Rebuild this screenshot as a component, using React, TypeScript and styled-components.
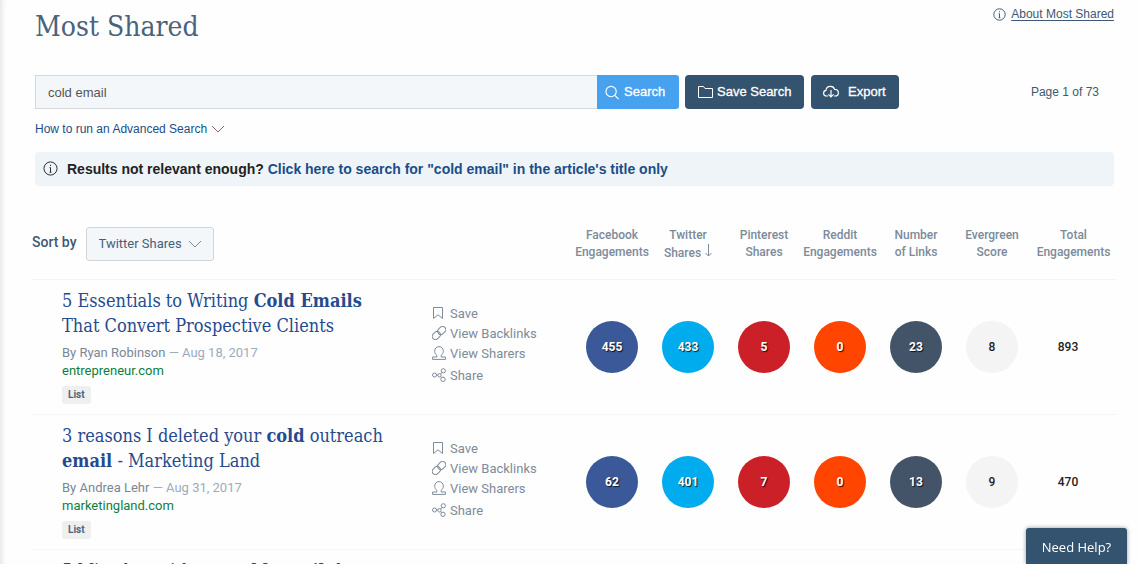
import React from "react";
import styled, { createGlobalStyle } from "styled-components";

const ui = `Roboto, "Liberation Sans", sans-serif`;
const slab = `"Roboto Slab", "DejaVu Serif Condensed", "DejaVu Serif", serif`;
const arial = `"Liberation Sans", Arial, sans-serif`;

const Global = createGlobalStyle`
  * { box-sizing: border-box; }
  body { margin: 0; background: #fefefe; font: 13px/20px ${ui}; color: #3f5873; }
  a { color: inherit; text-decoration: none; }
  button, input, select { font: inherit; }
`;

const Page = styled.main`
  height: 100vh;
  overflow: hidden;
  padding: 0 22px 0 32px;
  box-shadow: inset 6px 0 6px -5px #dcdcdc;
`;

const Section = styled.div`
  padding: 0 3px;
  font-family: ${arial};
`;

const TopBar = styled.header`
  display: flex;
  justify-content: space-between;
  align-items: flex-start;
  height: 75px;
`;

const Title = styled.h1`
  margin: 0;
  padding-top: 8px;
  font: 300 28px/38px ${slab};
  color: #4a627c;
`;

const AboutLink = styled.a`
  display: flex;
  align-items: center;
  gap: 5px;
  padding-top: 4px;
  font-size: 12px;
  line-height: 20px;
  span { text-decoration: underline; text-underline-offset: 2px; }
`;

const SearchBar = styled.form`
  display: flex;
  align-items: center;
`;

const SearchInput = styled.input`
  flex: 1;
  min-width: 0;
  height: 34px;
  padding: 0 12px;
  border: 1px solid #d5d8da;
  border-right: 0;
  border-radius: 0;
  background: #f3f7fa;
  color: #555;
  outline: 0;
`;

const Button = styled.button<{ $kind?: "primary"; $width: number; $gap: number }>`
  display: flex;
  align-items: center;
  gap: ${(p) => p.$gap}px;
  width: ${(p) => p.$width}px;
  height: 34px;
  margin-right: ${(p) => (p.$kind ? 6 : 7)}px;
  padding: 0 0 0 ${(p) => (p.$kind ? 8 : 12)}px;
  border: 0;
  border-radius: ${(p) => (p.$kind ? "0 3px 3px 0" : "4px")};
  background: ${(p) => (p.$kind ? "#46a1ef" : "#34536e")};
  color: #fff;
  font-size: 13px;
  -webkit-text-stroke: 0.3px #fff;
`;

const PageCount = styled.span`
  width: 208px;
  padding-right: 15px;
  text-align: right;
  font-size: 12px;
`;

const AdvancedLink = styled.a`
  display: inline-flex;
  align-items: center;
  gap: 4px;
  margin: 10px 0 13px;
  font-size: 12px;
  color: #194e88;
`;

const Notice = styled.p`
  display: flex;
  align-items: center;
  gap: 9px;
  margin: 0;
  height: 34px;
  padding: 0 8px;
  border-radius: 4px;
  background: #eff4f8;
  color: #222;
  font: bold 14px/20px ${arial};
  a { color: #194e88; }
  svg { margin-bottom: 2px; }
`;

const Results = styled.table`
  width: 100%;
  margin-top: 30px;
  border-collapse: collapse;
  table-layout: fixed;
`;

const HeadCell = styled.th`
  height: 63px;
  padding: 11px 0 0;
  vertical-align: top;
  font-size: 12px;
  line-height: 17px;
  font-weight: 500;
  color: #7b8b9b;
  white-space: nowrap;
`;

const SortCell = styled.th`
  padding: 11px 0 0;
  vertical-align: top;
  text-align: left;
`;

const Sort = styled.div`
  display: flex;
  align-items: flex-start;
  gap: 9px;
  label { font-size: 14px; font-weight: 500; line-height: 30px; }
`;

const SelectBox = styled.div`
  display: grid;
  align-items: center;
  width: 128px;
  > * { grid-area: 1 / 1; }
  svg { justify-self: end; margin-right: 12px; pointer-events: none; }
`;

const Select = styled.select`
  appearance: none;
  width: 100%;
  height: 34px;
  padding: 0 12px;
  border: 1px solid #d2d6da;
  border-radius: 3px;
  background: #f3f7fa;
  color: #46607a;
  font-size: 13px;
  font-weight: 400;
`;

const Row = styled.tr`
  height: 135px;
  border-top: 1px solid #f4f5f6;
`;

const Cell = styled.td<{ $indent?: number; $top: number }>`
  padding: ${(p) => p.$top}px 0 0 ${(p) => p.$indent ?? 0}px;
  vertical-align: top;
`;

const Headline = styled.a`
  display: block;
  font: 18px/25px ${slab};
  color: #264a8f;
  white-space: nowrap;
`;

const Byline = styled.div`
  margin-top: 6px;
  line-height: 18px;
  color: #7b8797;
  span { color: #9dabbb; }
`;

const Domain = styled.a`
  display: block;
  line-height: 18px;
  color: #0c8040;
`;

const Tag = styled.span`
  display: inline-block;
  margin-top: 6px;
  padding: 0 6px;
  border-radius: 3px;
  background: #efefef;
  color: #4c657e;
  font: bold 10px/18px ${ui};
`;

const Actions = styled.ul`
  margin: 0;
  padding: 0;
  list-style: none;
`;

const Action = styled.li`
  line-height: 20px;
  &:last-child { padding-top: 2px; }
  a { display: flex; align-items: center; gap: 4px; color: #7e8b9a; }
  svg { margin-bottom: 1px; }
`;

const Metric = styled.div<{ $bg?: string; $light?: boolean }>`
  display: grid;
  place-items: center;
  width: 52px;
  height: 52px;
  margin-left: 12px;
  border-radius: 50%;
  background: ${(p) => p.$bg ?? "transparent"};
  color: ${(p) => (p.$light ? "#fff" : "#222")};
  text-shadow: ${(p) => (p.$light ? "1px 1px 1px rgba(0,0,0,.8)" : "none")};
  font-weight: ${(p) => (p.$light ? 700 : 500)};
  font-size: 12px;
`;

const Help = styled.button`
  position: fixed;
  right: 12px;
  bottom: 0;
  width: 101px;
  height: 36px;
  padding: 2px 0 0;
  border: 0;
  border-radius: 3px 3px 0 0;
  background: #34536e;
  color: #fff;
  box-shadow: 0 0 4px rgba(0, 0, 0, 0.4);
  font: 500 13px/20px "Open Sans", sans-serif;
`;

const Svg = styled.svg`
  flex: none;
  fill: none;
  stroke: currentColor;
`;

const SortChevron = styled(Svg)`
  color: #7b8b9b;
`;

const LinkChevron = styled(Svg)`
  color: #9a5f78;
`;

const paths: Record<string, React.ReactNode> = {
  info: <><circle cx="8" cy="8" r="7" /><path d="M8 7v5M8 4v1.3M7 12h2M7 7h1" /></>,
  search: <><circle cx="6.500" cy="7" r="5.500" /><path d="M10.500 11l4 4" /></>,
  folder: <path d="M1.500 2.500h5l1.500 2h7.500v9h-14z" />,
  cloud: <><path d="M5 12H3.600C1.800 12 .6 10.800.6 9.200c0-1.500 1-2.600 2.400-2.800C3.100 3.800 5 2.300 7.400 2.300c2 0 3.700 1.100 4.200 3 2.200-.1 3.800 1.300 3.800 3.400 0 1.900-1.400 3.300-3.200 3.300H11" /><path d="M8 6v7M5.400 10.400L8 13l2.600-2.600" /></>,
  bookmark: <path d="M1.500 1.500h9v11L6 8.800l-4.500 3.700z" />,
  link: <><rect x="-4.400" y="-3.200" width="8.800" height="6.400" rx="3.200" transform="translate(4.300 9.500) rotate(-45)" /><rect x="-4.400" y="-3.200" width="8.800" height="6.400" rx="3.200" transform="translate(9.700 4.500) rotate(-45)" /></>,
  person: <path d="M.6 13.400v-2.400h4.200V9.300C3.500 8.400 2.700 6.900 2.700 5.200 2.700 2.500 4.500.6 7 .6s4.300 1.900 4.300 4.600c0 1.700-.8 3.200-2.100 4.100V11h4.200v2.400z" />,
  share: <><circle cx="2.500" cy="7" r="2" /><circle cx="7.500" cy="7.300" r="1.700" /><circle cx="11.300" cy="2.800" r="2.100" /><circle cx="11" cy="11.300" r="2.200" /><path d="M4.500 7h1.300M8.600 6l1.400-1.600M8.600 8.600l1 1.100" /></>,
};

const Icon = ({ name, size, view = 16, weight = 1 }: { name: string; size: number; view?: number; weight?: number }) => (
  <Svg width={size} height={size} viewBox={`0 0 ${view} ${view}`} strokeWidth={weight} aria-hidden="true">{paths[name]}</Svg>
);

const DownArrow = () => (
  <Svg width="8" height="13" viewBox="0 0 8 13" aria-hidden="true"><path d="M4.500 0v12M1.500 9l3 3 3-3" /></Svg>
);

const columns: [string, string][] = [
  ["Facebook", "Engagements"],
  ["Twitter", "Shares"],
  ["Pinterest", "Shares"],
  ["Reddit", "Engagements"],
  ["Number", "of Links"],
  ["Evergreen", "Score"],
  ["Total", "Engagements"],
];

const fills = ["#3b5998", "#00abee", "#cb2028", "#ff4500", "#435469", "#f4f4f4", undefined];

const MetricCol = styled.col<{ $last: boolean }>`
  width: ${(p) => (p.$last ? 87 : 76)}px;
`;

const ActionCol = styled.col`
  width: 142px;
`;

const articles = [
  {
    title: <>5 Essentials to Writing <b>Cold Emails</b><br />That Convert Prospective Clients</>,
    author: "Ryan Robinson", date: "Aug 18, 2017", domain: "entrepreneur.com",
    counts: [455, 433, 5, 0, 23, 8, 893],
  },
  {
    title: <>3 reasons I deleted your <b>cold</b> outreach<br /><b>email</b> - Marketing Land</>,
    author: "Andrea Lehr", date: "Aug 31, 2017", domain: "marketingland.com",
    counts: [62, 401, 7, 0, 13, 9, 470],
  },
];

const actions: [string, string][] = [
  ["bookmark", "Save"],
  ["link", "View Backlinks"],
  ["person", "View Sharers"],
  ["share", "Share"],
];

export default function App() {
  return (
    <Page>
      <Global />
      <Section>
        <TopBar>
          <Title>Most Shared</Title>
          <AboutLink href="#about"><Icon name="info" size={13} weight={1.2} /><span>About Most Shared</span></AboutLink>
        </TopBar>
        <SearchBar onSubmit={(e) => e.preventDefault()}>
          <SearchInput aria-label="Search" defaultValue="cold email" />
          <Button $kind="primary" $width={82} $gap={4}><Icon name="search" size={15} weight={1.2} />Search</Button>
          <Button type="button" $width={119} $gap={4}><Icon name="folder" size={16} />Save Search</Button>
          <Button type="button" $width={88} $gap={9}><Icon name="cloud" size={16} weight={1.2} />Export</Button>
          <PageCount>Page 1 of 73</PageCount>
        </SearchBar>
        <AdvancedLink href="#advanced">
          How to run an Advanced Search
          <LinkChevron width="14" height="8" viewBox="0 0 14 8" aria-hidden="true"><path d="M1 1l6 6 6-6" /></LinkChevron>
        </AdvancedLink>
        <Notice>
          <Icon name="info" size={15} />
          <span>Results not relevant enough? <a href="#title-only">Click here to search for "cold email" in the article's title only</a></span>
        </Notice>
      </Section>
      <Results>
        <colgroup>
          <col />
          <ActionCol />
          {columns.map(([a]) => <MetricCol key={a} $last={a === "Total"} />)}
        </colgroup>
        <thead>
          <tr>
            <SortCell colSpan={2}>
              <Sort>
                <label htmlFor="sort">Sort by</label>
                <SelectBox>
                  <Select id="sort"><option>Twitter Shares</option></Select>
                  <SortChevron width="14" height="8" viewBox="0 0 14 8" aria-hidden="true"><path d="M1 1l6 6 6-6" /></SortChevron>
                </SelectBox>
              </Sort>
            </SortCell>
            {columns.map(([a, b]) => (
              <HeadCell key={a} scope="col">{a}<br />{b}{a === "Twitter" && <> <DownArrow /></>}</HeadCell>
            ))}
          </tr>
        </thead>
        <tbody>
          {articles.map((item) => (
            <Row key={item.domain}>
              <Cell $top={8} $indent={30}>
                <Headline href="#article">{item.title}</Headline>
                <Byline>By {item.author} <span>— {item.date}</span></Byline>
                <Domain href="#domain">{item.domain}</Domain>
                <Tag>List</Tag>
              </Cell>
              <Cell $top={24}>
                <Actions>
                  {actions.map(([icon, label]) => (
                    <Action key={label}><a href="#action"><Icon name={icon} size={14} view={14} />{label}</a></Action>
                  ))}
                </Actions>
              </Cell>
              {item.counts.map((n, i) => (
                <Cell key={i} $top={41}><Metric $bg={fills[i]} $light={i < 5}>{n}</Metric></Cell>
              ))}
            </Row>
          ))}
          <Row>
            <Cell $top={8} $indent={30}>
              <Headline href="#article">5 Mistakes with our <b>cold email</b> that</Headline>
            </Cell>
            <Cell $top={24} colSpan={8} />
          </Row>
        </tbody>
      </Results>
      <Help type="button">Need Help?</Help>
    </Page>
  );
}
